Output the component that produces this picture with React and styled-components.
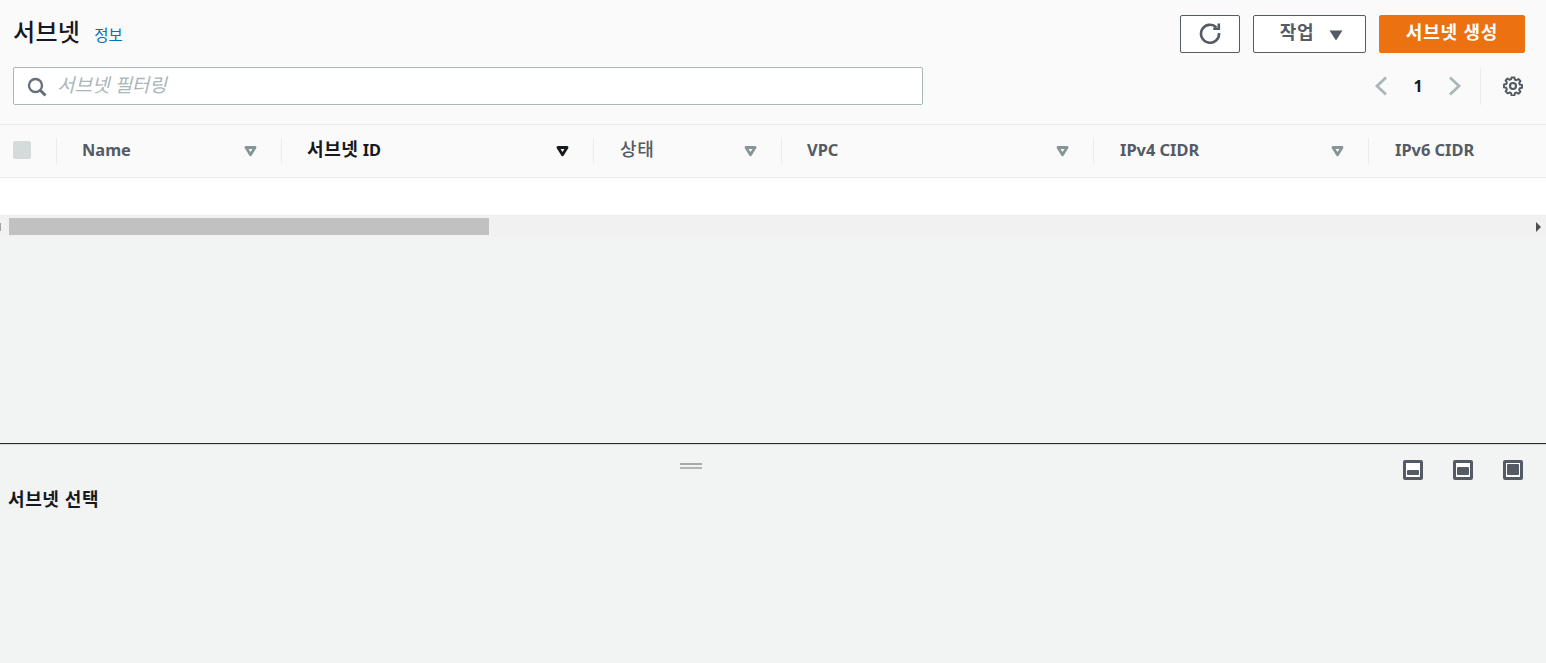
import React from 'react'
import styled, { createGlobalStyle } from 'styled-components'

const GlobalStyle = createGlobalStyle`
  * { box-sizing: border-box; }
  html, body { margin: 0; padding: 0; height: 100%; }
  body {
    background: #f2f3f3;
    color: #16191f;
    font-family: "Noto Sans", "Noto Sans CJK KR", "Open Sans", sans-serif;
    font-size: 14px;
    overflow: hidden;
  }
`

const Page = styled.div`
  width: 1546px;
  height: 663px;
  display: flex;
  flex-direction: column;
  overflow: hidden;
`

const TopArea = styled.div`
  height: 443px;
  flex: none;
`

const Header = styled.div`
  height: 125px;
  background: #fafafa;
  border-bottom: 1px solid #eaeded;
  padding: 15px 21px 0 13px;
  display: flex;
  flex-direction: column;
  gap: 14px;
`

const Row = styled.div`
  height: 38px;
  display: flex;
  align-items: center;
  justify-content: space-between;
`

const TitleGroup = styled.div`
  display: flex;
  align-items: center;
  gap: 14px;
  height: 30px;
  margin-top: -4px;
`

const Title = styled.h1`
  margin: 0;
  font-size: 24px;
  font-weight: 500;
  line-height: 30px;
  letter-spacing: 0.3px;
  color: #16191f;
`

const InfoLink = styled.a`
  font-size: 15.5px;
  line-height: 20px;
  margin-top: 5px;
  color: #0073bb;
`

const Actions = styled.div`
  display: flex;
  gap: 13px;
`

const Button = styled.button`
  height: 38px;
  width: ${p => p.$width}px;
  border-radius: 2px;
  border: 1px solid ${p => (p.$primary ? '#ec7211' : '#545b64')};
  background: ${p => (p.$primary ? '#ec7211' : '#ffffff')};
  color: ${p => (p.$primary ? '#ffffff' : '#545b64')};
  font-family: inherit;
  font-size: 18px;
  font-weight: 700;
  letter-spacing: 0.8px;
  line-height: 22px;
  padding: 0 0 4px;
  display: flex;
  align-items: center;
  justify-content: center;
  gap: 17px;
`

const RefreshGlyph = styled.svg`
  position: relative;
  top: 1px;
`

const CaretGlyph = styled.svg`
  position: relative;
  top: 3px;
  left: 1px;
`

const ButtonLabel = styled.span`
  position: relative;
  left: 3px;
`

const SearchBox = styled.div`
  width: 910px;
  height: 38px;
  background: #ffffff;
  border: 1px solid #aab7b8;
  border-radius: 2px;
  display: flex;
  align-items: center;
  padding: 0 0 0 13px;
  gap: 10px;
`

const SearchGlyph = styled.svg`
  position: relative;
  top: 1px;
`

const Placeholder = styled.span`
  font-size: 19px;
  font-style: italic;
  color: #aab7b8;
  line-height: 22px;
  margin-top: -3px;
`

const Pager = styled.div`
  display: flex;
  align-items: center;
  height: 38px;
  margin-right: 2px;
`

const PageNumber = styled.span`
  width: 60px;
  text-align: center;
  font-size: 16px;
  font-weight: 700;
  color: #16191f;
`

const PagerDivider = styled.div`
  width: 1px;
  height: 38px;
  background: #eaeded;
  margin: 0 22px 0 18px;
`

const TableHead = styled.div`
  height: 53px;
  background: #fafafa;
  border-bottom: 1px solid #eaeded;
  display: grid;
  grid-template-columns: 56px 225px 312px 188px 312px 275px 1fr;
  align-items: center;
`

const CheckCell = styled.div`
  padding-left: 13px;
  display: flex;
  margin-top: -2px;
`

const Checkbox = styled.div`
  width: 18px;
  height: 18px;
  border-radius: 2px;
  background: #d5dbdb;
`

const HeadCell = styled.div`
  height: 26px;
  border-left: 1px solid #eaeded;
  padding: 0 24px 0 ${p => p.$pad || 25}px;
  display: flex;
  align-items: center;
  justify-content: space-between;
  font-size: 16.4px;
  font-weight: 700;
  color: ${p => (p.$active ? '#16191f' : '#545b64')};
  white-space: nowrap;
`

const HeadLabel = styled.span`
  margin-top: -3px;
  line-height: 22px;
`

const Hangul = styled.span`
  font-size: 18px;
  font-weight: ${p => (p.$regular ? 500 : 700)};
  letter-spacing: 0.6px;
`

const EmptyRow = styled.div`
  height: 37px;
  background: #ffffff;
`

const ScrollTrack = styled.div`
  height: 22px;
  background: #f1f1f1;
  border-top: 1px solid #eaeded;
  display: flex;
  align-items: center;
  justify-content: space-between;
  padding: 0 5px 0 0;
`

const ScrollStart = styled.div`
  display: flex;
  align-items: center;
`

const ScrollLeftMark = styled.div`
  width: 1px;
  height: 8px;
  background: #a3a3a3;
`

const ScrollThumb = styled.div`
  width: 480px;
  height: 17px;
  background: #c1c1c1;
  margin-left: 8px;
`

const ScrollArrow = styled.div`
  width: 0;
  height: 0;
  border-style: solid;
  border-width: 5px 0 5px 5px;
  border-color: transparent transparent transparent #505050;
`

const SplitPanel = styled.div`
  flex: 1;
  background: #f2f3f3;
  border-top: 1px solid #2a2e33;
  box-shadow: inset 0 1px 0 #d5dbdb;
  position: relative;
  padding: 44px 8px 0;
`

const DragHandle = styled.div`
  position: absolute;
  top: 19px;
  left: 680px;
  width: 22px;
  height: 6px;
  border-top: 2px solid #a9a9a9;
  border-bottom: 2px solid #b5b5b5;
`

const PanelIcons = styled.div`
  position: absolute;
  top: 16px;
  right: 23px;
  display: flex;
  gap: 30px;
`

const PanelIcon = styled.div`
  width: 20px;
  height: 20px;
  border: 3px solid #545b64;
  border-radius: 2px;
  background: #ffffff;
  padding: 1px 1px 2px;
  display: flex;
  align-items: flex-end;
`

const PanelFill = styled.div`
  width: 100%;
  height: ${p => p.$fill}px;
  background: #545b64;
  border-radius: 1px;
`

const PanelTitle = styled.h2`
  margin: 0;
  font-size: 18px;
  font-weight: 700;
  letter-spacing: 0.6px;
  line-height: 22px;
  color: #16191f;
`

const SortIcon = ({ active }) => (
  <svg width="13" height="11" viewBox="0 0 13 11">
    <path
      d="M2 1.500h9L6.500 8.800z"
      fill="none"
      stroke={active ? '#16191f' : '#879596'}
      strokeWidth="2.800"
      strokeLinejoin="round"
    />
  </svg>
)

const columns = [
  { label: 'Name' },
  { hangul: '서브넷', label: ' ID', active: true },
  { hangul: '상태', regular: true, pad: 26 },
  { label: 'VPC' },
  { label: 'IPv4 CIDR', pad: 26 },
]

export default function App() {
  return (
    <Page>
      <GlobalStyle />
      <TopArea>
        <Header>
          <Row>
            <TitleGroup>
              <Title>서브넷</Title>
              <InfoLink>정보</InfoLink>
            </TitleGroup>
            <Actions>
              <Button $width={60} aria-label="새로 고침">
                <RefreshGlyph width="22" height="22" viewBox="0 0 22 22" fill="none" stroke="#545b64" strokeWidth="2.600">
                  <path d="M17.400 5.400A9 9 0 1 0 20 11" />
                  <path d="M19.800 1.400v5.400h-5.600" />
                </RefreshGlyph>
              </Button>
              <Button $width={113}>
                <ButtonLabel>작업</ButtonLabel>
                <CaretGlyph width="14" height="11" viewBox="0 0 14 11">
                  <path d="M0.500 0.500h13L7 10.500z" fill="#545b64" />
                </CaretGlyph>
              </Button>
              <Button $width={146} $primary>서브넷 생성</Button>
            </Actions>
          </Row>
          <Row>
            <SearchBox>
              <SearchGlyph width="20" height="20" viewBox="0 0 20 20" fill="none" stroke="#687078">
                <circle cx="8.500" cy="8.500" r="6.500" strokeWidth="2.400" />
                <path d="M13.500 13.500l5 5" strokeWidth="3" />
              </SearchGlyph>
              <Placeholder>서브넷 필터링</Placeholder>
            </SearchBox>
            <Pager>
              <svg width="14" height="20" viewBox="0 0 14 20" fill="none" stroke="#aab7b8" strokeWidth="2.800">
                <path d="M12 1.500L3 10l9 8.500" />
              </svg>
              <PageNumber>1</PageNumber>
              <svg width="14" height="20" viewBox="0 0 14 20" fill="none" stroke="#aab7b8" strokeWidth="2.800">
                <path d="M2 1.500L11 10l-9 8.500" />
              </svg>
              <PagerDivider />
              <svg width="20" height="20" viewBox="0 0 20 20" fill="none" stroke="#545b64" strokeWidth="2.200" strokeLinejoin="round">
                <circle cx="10" cy="10" r="3" />
                <path d="M8.400 1h3.200l.5 2.500 1.700.7 2.200-1.400 2.200 2.200-1.400 2.200.7 1.700 2.500.5v3.200l-2.500.5-.7 1.700 1.400 2.200-2.200 2.200-2.200-1.400-1.700.7-.5 2.500H8.400l-.5-2.500-1.700-.7L4 18.700l-2.200-2.200 1.400-2.200-.7-1.700L0 12.100V8.900l2.500-.5.7-1.700L1.800 4.500 4 2.300l2.200 1.400 1.700-.7z" transform="translate(1 .500) scale(.9)" />
              </svg>
            </Pager>
          </Row>
        </Header>
        <TableHead>
          <CheckCell><Checkbox /></CheckCell>
          {columns.map(col => (
            <HeadCell key={col.hangul || col.label} $active={col.active} $pad={col.pad}>
              <HeadLabel>
                {col.hangul && <Hangul $regular={col.regular}>{col.hangul}</Hangul>}
                {col.label}
              </HeadLabel>
              <SortIcon active={col.active} />
            </HeadCell>
          ))}
          <HeadCell $pad={26}><HeadLabel>IPv6 CIDR</HeadLabel></HeadCell>
        </TableHead>
        <EmptyRow />
        <ScrollTrack>
          <ScrollStart>
            <ScrollLeftMark />
            <ScrollThumb />
          </ScrollStart>
          <ScrollArrow />
        </ScrollTrack>
      </TopArea>
      <SplitPanel>
        <DragHandle />
        <PanelIcons>
          <PanelIcon><PanelFill $fill={5} /></PanelIcon>
          <PanelIcon><PanelFill $fill={8} /></PanelIcon>
          <PanelIcon><PanelFill $fill={11} /></PanelIcon>
        </PanelIcons>
        <PanelTitle>서브넷 선택</PanelTitle>
      </SplitPanel>
    </Page>
  )
}
